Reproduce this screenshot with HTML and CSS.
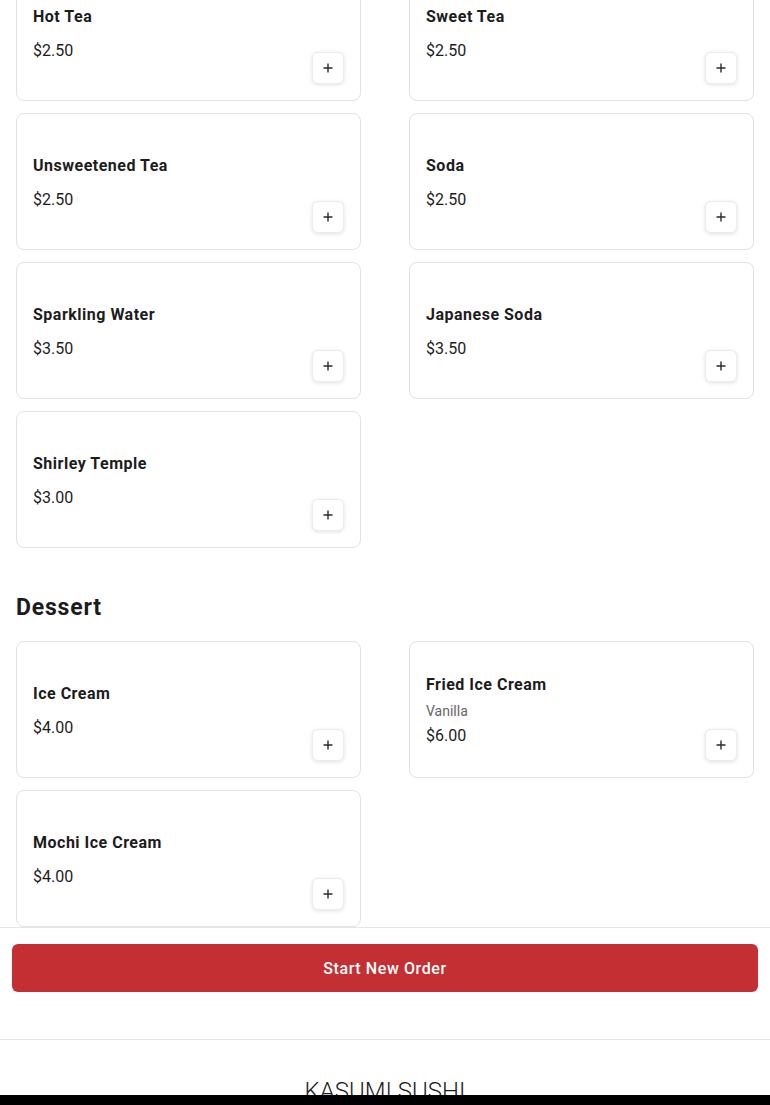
FILE: index.html
```html
<!DOCTYPE html>
<html lang="en">
<head>
    <meta charset="UTF-8">
    <meta name="viewport" content="width=device-width, initial-scale=1.0">
    <title>Kasumi Sushi - Menu</title>
    <link rel="stylesheet" href="styles.css">
</head>
<body>
    <main class="menu">
        <section class="menu-section drinks">
            <div class="item-grid">
                <div class="item-card">
                    <div class="item-info">
                        <h3 class="item-name">Hot Tea</h3>
                        <div class="item-price">$2.50</div>
                    </div>
                    <button class="add-button" aria-label="Add Hot Tea"><svg viewBox="0 0 12 12"><path d="M6 1.5v9M1.5 6h9"/></svg></button>
                </div>
                <div class="item-card">
                    <div class="item-info">
                        <h3 class="item-name">Sweet Tea</h3>
                        <div class="item-price">$2.50</div>
                    </div>
                    <button class="add-button" aria-label="Add Sweet Tea"><svg viewBox="0 0 12 12"><path d="M6 1.5v9M1.5 6h9"/></svg></button>
                </div>
                <div class="item-card">
                    <div class="item-info">
                        <h3 class="item-name">Unsweetened Tea</h3>
                        <div class="item-price">$2.50</div>
                    </div>
                    <button class="add-button" aria-label="Add Unsweetened Tea"><svg viewBox="0 0 12 12"><path d="M6 1.5v9M1.5 6h9"/></svg></button>
                </div>
                <div class="item-card">
                    <div class="item-info">
                        <h3 class="item-name">Soda</h3>
                        <div class="item-price">$2.50</div>
                    </div>
                    <button class="add-button" aria-label="Add Soda"><svg viewBox="0 0 12 12"><path d="M6 1.5v9M1.5 6h9"/></svg></button>
                </div>
                <div class="item-card">
                    <div class="item-info">
                        <h3 class="item-name">Sparkling Water</h3>
                        <div class="item-price">$3.50</div>
                    </div>
                    <button class="add-button" aria-label="Add Sparkling Water"><svg viewBox="0 0 12 12"><path d="M6 1.5v9M1.5 6h9"/></svg></button>
                </div>
                <div class="item-card">
                    <div class="item-info">
                        <h3 class="item-name">Japanese Soda</h3>
                        <div class="item-price">$3.50</div>
                    </div>
                    <button class="add-button" aria-label="Add Japanese Soda"><svg viewBox="0 0 12 12"><path d="M6 1.5v9M1.5 6h9"/></svg></button>
                </div>
                <div class="item-card">
                    <div class="item-info">
                        <h3 class="item-name">Shirley Temple</h3>
                        <div class="item-price">$3.00</div>
                    </div>
                    <button class="add-button" aria-label="Add Shirley Temple"><svg viewBox="0 0 12 12"><path d="M6 1.5v9M1.5 6h9"/></svg></button>
                </div>
            </div>
        </section>

        <section class="menu-section">
            <h2 class="section-title">Dessert</h2>
            <div class="item-grid">
                <div class="item-card">
                    <div class="item-info">
                        <h3 class="item-name">Ice Cream</h3>
                        <div class="item-price">$4.00</div>
                    </div>
                    <button class="add-button" aria-label="Add Ice Cream"><svg viewBox="0 0 12 12"><path d="M6 1.5v9M1.5 6h9"/></svg></button>
                </div>
                <div class="item-card">
                    <div class="item-info">
                        <h3 class="item-name">Fried Ice Cream</h3>
                        <p class="item-desc">Vanilla</p>
                        <div class="item-price">$6.00</div>
                    </div>
                    <button class="add-button" aria-label="Add Fried Ice Cream"><svg viewBox="0 0 12 12"><path d="M6 1.5v9M1.5 6h9"/></svg></button>
                </div>
                <div class="item-card">
                    <div class="item-info">
                        <h3 class="item-name">Mochi Ice Cream</h3>
                        <div class="item-price">$4.00</div>
                    </div>
                    <button class="add-button" aria-label="Add Mochi Ice Cream"><svg viewBox="0 0 12 12"><path d="M6 1.5v9M1.5 6h9"/></svg></button>
                </div>
            </div>
        </section>
    </main>

    <div class="order-bar">
        <button class="order-button">Start New Order</button>
    </div>

    <footer class="footer">
        <div class="footer-name">KASUMI SUSHI</div>
    </footer>

    <div class="bottom-strip"></div>
</body>
</html>
```

FILE: styles.css
```css
body {
    font-family: 'Roboto', 'Liberation Sans', sans-serif;
    background-color: #fff;
    color: #1c1c1c;
    margin: 0;
    padding: 0;
    overflow: hidden;
}
.menu {
    padding: 0 16px;
}
.drinks {
    margin-top: -36px;
}
.menu-section + .menu-section {
    margin-top: 46px;
}
.section-title {
    margin: 0 0 19px;
    font-size: 23px;
    line-height: 28px;
    font-weight: 700;
    letter-spacing: 0.8px;
    color: #1c1c1c;
}
.item-grid {
    display: grid;
    grid-template-columns: 1fr 1fr;
    column-gap: 48px;
    row-gap: 12px;
}
.item-card {
    box-sizing: border-box;
    height: 137px;
    border: 1px solid #e2e2e2;
    border-radius: 8px;
    padding: 16px;
    display: flex;
    justify-content: space-between;
    background-color: #fff;
}
.item-info {
    align-self: center;
    padding-top: 2px;
}
.item-name {
    margin: 0 0 4px;
    font-size: 16px;
    line-height: 24px;
    font-weight: 700;
    color: #1c1c1c;
    letter-spacing: 0.5px;
}
.item-name + .item-price {
    margin-top: 10px;
}
.item-desc {
    margin: 0 0 3px;
    font-size: 14px;
    line-height: 20px;
    color: #666;
}
.item-price {
    font-size: 16px;
    line-height: 24px;
    color: #1c1c1c;
}
.add-button {
    align-self: flex-end;
    width: 32px;
    height: 32px;
    padding: 0;
    border: 1px solid #ececec;
    border-radius: 6px;
    background-color: #fff;
    box-shadow: 0 1px 4px rgba(0, 0, 0, 0.12);
    display: flex;
    align-items: center;
    justify-content: center;
    cursor: pointer;
}
.add-button svg {
    width: 12px;
    height: 12px;
    stroke: #2a2a2a;
    stroke-width: 1.4;
    fill: none;
}
.order-bar {
    border-top: 1px solid #e6e6e6;
    padding: 16px 12px;
    background-color: #fff;
}
.order-button {
    width: 100%;
    height: 48px;
    border: none;
    border-radius: 6px;
    background-color: #c32f32;
    color: #fff;
    font-family: 'Roboto', 'Liberation Sans', sans-serif;
    font-size: 16px;
    font-weight: 500;
    letter-spacing: 0.6px;
    cursor: pointer;
}
.footer {
    margin-top: 31px;
    border-top: 1px solid #e6e6e6;
    padding-top: 35px;
    text-align: center;
}
.footer-name {
    font-size: 24px;
    line-height: 32px;
    font-weight: 300;
    color: #1c1c1c;
}
.bottom-strip {
    position: fixed;
    left: 0;
    right: 0;
    bottom: 0;
    height: 10px;
    background-color: #000;
}
```
